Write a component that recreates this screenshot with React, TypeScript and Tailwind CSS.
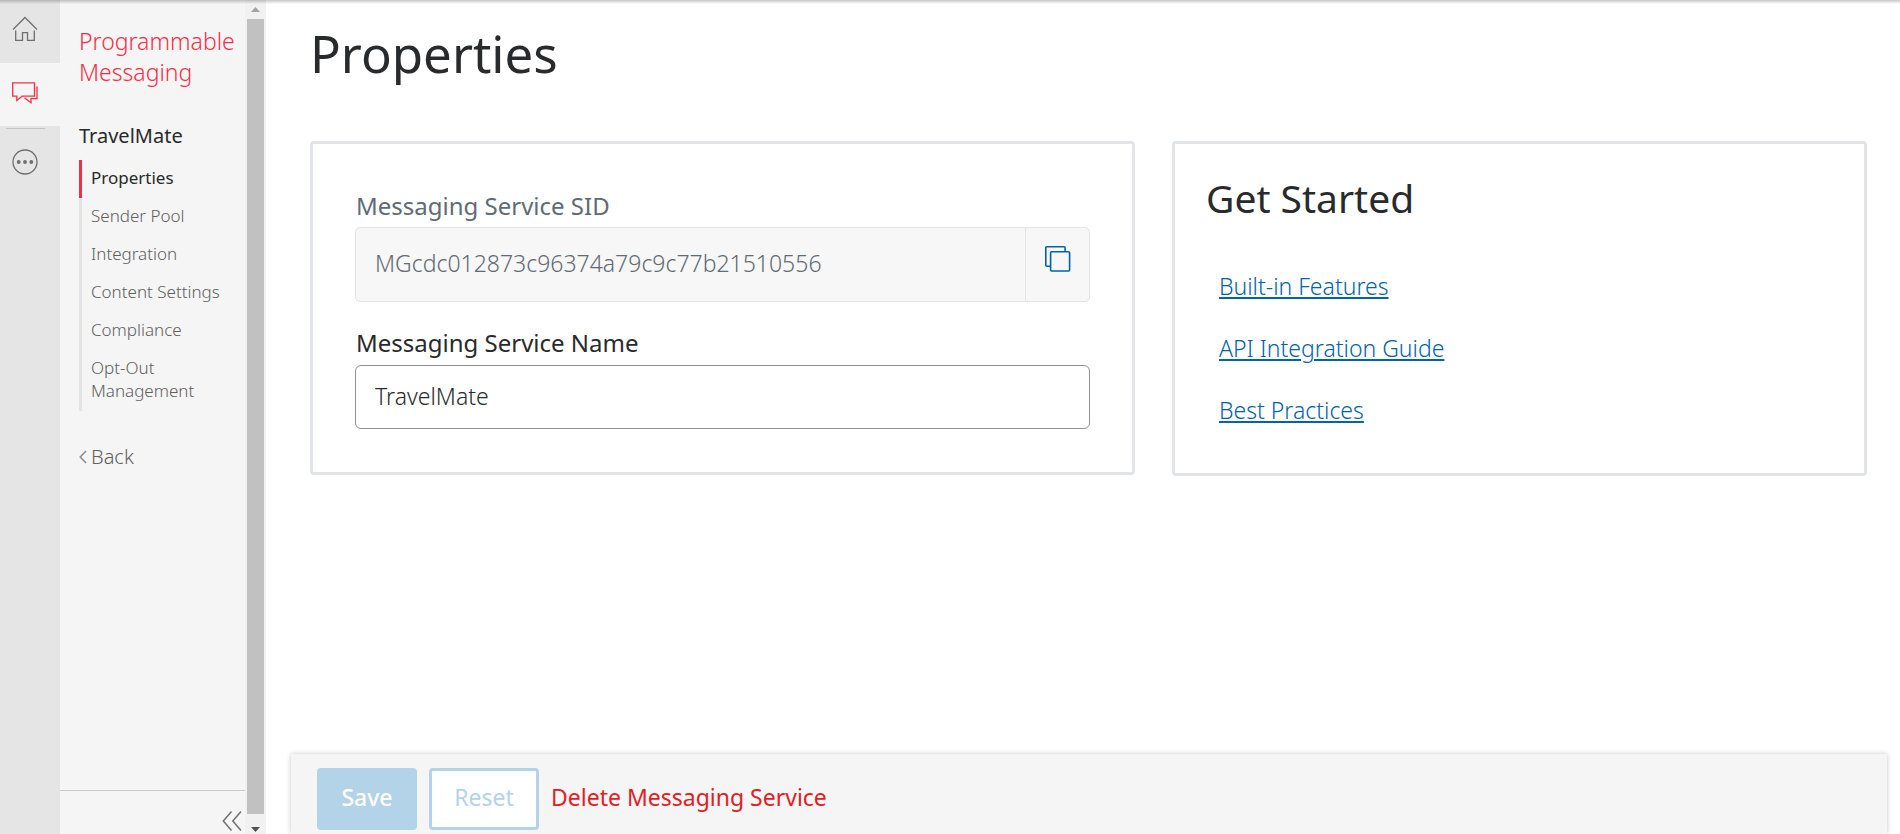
const navItems = ['Sender Pool', 'Integration', 'Content Settings', 'Compliance', 'Opt-Out Management'];
const guides = ['Built-in Features', 'API Integration Guide', 'Best Practices'];

function HomeIcon() {
  return (
    <svg width="26" height="26" viewBox="0 0 26 26" fill="none" stroke="#6f6f6f" strokeWidth="1.3" aria-hidden="true">
      <path d="M1 13.5 13 1.5l12 12M3.7 14.5v9.8h6.8v-7.6h5v7.6h6.8v-9.8" />
    </svg>
  );
}

function ChatIcon() {
  return (
    <svg width="26" height="22" viewBox="0 0 26 22" fill="none" stroke="#f22f46" strokeWidth="1.3" aria-hidden="true">
      <path d="M.7.8h21.8v13.4H10.2l-5.4 4.3v-4.3H.7z" />
      <path d="M25 4.5v12.1h-6v4.1l-6.6-5" />
    </svg>
  );
}

function MoreIcon() {
  return (
    <svg width="26" height="26" viewBox="0 0 26 26" fill="none" stroke="#6f6f6f" strokeWidth="1.3" aria-hidden="true">
      <circle cx="13" cy="13" r="12" />
      <g fill="#6f6f6f" stroke="none">
        <circle cx="6.7" cy="13" r="1.9" />
        <circle cx="13" cy="13" r="1.9" />
        <circle cx="19.3" cy="13" r="1.9" />
      </g>
    </svg>
  );
}

function CopyIcon() {
  return (
    <svg width="26" height="26" viewBox="0 0 26 26" fill="none" stroke="#0263a8" strokeWidth="1.6" aria-hidden="true">
      <path d="M5.2 20.3H1.800a1 1 0 0 1-1-1V1.800a1 1 0 0 1 1-1h17.300a1 1 0 0 1 1 1v3.900" />
      <rect x="5.600" y="5.700" width="19" height="19.300" rx="1" />
    </svg>
  );
}

function Rail() {
  return (
    <nav aria-label="Products" className="flex w-[60px] shrink-0 flex-col bg-[#e5e5e5]">
      <a href="#home" aria-label="Home" className="flex h-[63px] items-center pb-1.5 pl-3">
        <HomeIcon />
      </a>
      <a href="#messaging" aria-label="Messaging" className="flex h-[63px] items-center bg-[#f5f5f5] pb-1 pl-3">
        <ChatIcon />
      </a>
      <div className="mt-0.5 ml-1.5 h-px w-[39px] bg-[#c4c4c4]" />
      <a href="#more" aria-label="More products" className="mt-5 pl-3">
        <MoreIcon />
      </a>
    </nav>
  );
}

function Sidebar() {
  return (
    <aside className="flex w-[185px] shrink-0 flex-col bg-[#f5f5f5]">
      <div className="pt-[26px] pl-[19px]">
        <h2 className="text-[23px] leading-[31px] font-light text-[#f22f46]">
          Programmable
          <br />
          Messaging
        </h2>
        <p className="mt-[36px] text-[20px] leading-6 text-[#282a2b]">TravelMate</p>
        <ul className="mt-3 text-[17px] leading-[23px]">
          <li className="border-l-[3px] border-[#f22f46] pt-[6px] pb-[9px] pl-[9px]">
            <a href="#properties" className="text-[#282a2b]">Properties</a>
          </li>
          {navItems.map((item) => (
            <li key={item} className="border-l-[3px] border-[#e3e3e3] pt-[6px] pb-[9px] pl-[9px]">
              <a href="#nav" className="block font-light text-[#606060]">{item}</a>
            </li>
          ))}
        </ul>
        <a href="#back" className="mt-[34px] flex items-center gap-1 text-[20px] leading-6 font-light text-[#606060]">
          <svg width="8" height="14" viewBox="0 0 8 14" fill="none" stroke="#8a8a8a" strokeWidth="1.5" aria-hidden="true">
            <path d="M7 1 1.2 7 7 13" />
          </svg>
          Back
        </a>
      </div>
      <div className="mt-auto flex justify-end border-t border-[#cacaca] pt-5 pr-[3px] pb-[3px]">
        <button type="button" aria-label="Collapse menu">
          <svg width="20" height="20" viewBox="0 0 20 20" fill="none" stroke="#707070" strokeWidth="1.5" aria-hidden="true">
            <path d="M9.5.5 1.3 10l8.2 9.5M19 .5 10.8 10l8.2 9.5" />
          </svg>
        </button>
      </div>
    </aside>
  );
}

function ScrollTrack() {
  return (
    <div aria-hidden="true" className="flex w-[21px] shrink-0 flex-col items-center bg-[#f1f1f1]">
      <svg width="9" height="5" viewBox="0 0 9 5" className="mt-[7px] mb-[7px]">
        <path d="M0 5 4.5 0 9 5z" fill="#a3a3a3" />
      </svg>
      <div className="w-[17px] grow bg-[#c1c1c1]" />
      <svg width="9" height="5" viewBox="0 0 9 5" className="mt-[13px] mb-[2px]">
        <path d="M0 0h9L4.5 5z" fill="#505050" />
      </svg>
    </div>
  );
}

export default function App() {
  return (
    <div className="relative flex h-screen overflow-hidden bg-white font-['Noto_Sans',sans-serif]">
      <div className="pointer-events-none absolute inset-x-0 top-0 h-1 bg-linear-to-b from-[#00000038] to-transparent" />
      <Rail />
      <Sidebar />
      <ScrollTrack />
      <main className="flex min-w-0 grow flex-col">
        <div className="pr-[33px] pl-[44px]">
          <h1 className="mt-[18px] text-[51px] leading-[70px] text-[#282a2b]">Properties</h1>
          <div className="mt-[53px] grid grid-cols-[825fr_695fr] items-start gap-[37px]">
            <section className="rounded-[4px] border-[3px] border-[#e1e5e8] px-[42px] pt-[47px] pb-[43px]">
              <label htmlFor="sid" className="block pl-px text-[24px] leading-[30px] text-[#606b73]">
                Messaging Service SID
              </label>
              <div className="mt-[6px] flex h-[75px] rounded-[5px] border border-[#e1e5e8] bg-[#f7f7f7]">
                <input
                  id="sid"
                  readOnly
                  value="MGcdc012873c96374a79c9c77b21510556"
                  className="min-w-0 grow pb-1 pl-[19px] text-[23px] leading-[30px] font-light text-[#606b73] outline-none"
                />
                <button type="button" aria-label="Copy SID" className="flex w-[64px] items-center justify-center border-l border-[#e1e5e8] pb-3">
                  <CopyIcon />
                </button>
              </div>
              <label htmlFor="name" className="mt-[26px] block pl-px text-[24px] leading-[30px] text-[#282a2b]">
                Messaging Service Name
              </label>
              <input
                id="name"
                defaultValue="TravelMate"
                className="mt-[7px] block h-[64px] w-full rounded-[6px] border border-[#8f9294] pb-0.5 pl-[19px] text-[23px] leading-[30px] font-light text-[#282a2b] outline-none"
              />
            </section>
            <section className="rounded-[4px] border-[3px] border-[#e1e5e8] px-[31px] pt-[28px] pb-12">
              <h2 className="text-[39px] leading-[52px] text-[#282a2b]">Get Started</h2>
              <ul className="mt-[47px] flex flex-col gap-8 pl-[13px] text-[23px] leading-[30px] font-light text-[#0263a8]">
                {guides.map((guide) => (
                  <li key={guide}>
                    <a href="#guide" className="underline decoration-2 underline-offset-2">{guide}</a>
                  </li>
                ))}
              </ul>
            </section>
          </div>
        </div>
        <footer className="mt-auto mr-[13px] ml-[25px] flex items-center bg-[#f5f5f5] pt-[14px] pb-1 pl-[26px] text-[23px] leading-[30px] shadow-[0_0_5px_#00000038]">
          <button type="button" className="h-[62px] w-[100px] rounded-[4px] bg-[#b3d3e9] pb-1 font-medium text-white">Save</button>
          <button type="button" className="ml-3 h-[62px] w-[110px] rounded-[4px] border-[3px] border-[#b3d3e9] bg-white pb-1 text-[#b3d3e9]">
            Reset
          </button>
          <button type="button" className="ml-3 pb-1 text-[#e12025]">Delete Messaging Service</button>
        </footer>
      </main>
    </div>
  );
}
